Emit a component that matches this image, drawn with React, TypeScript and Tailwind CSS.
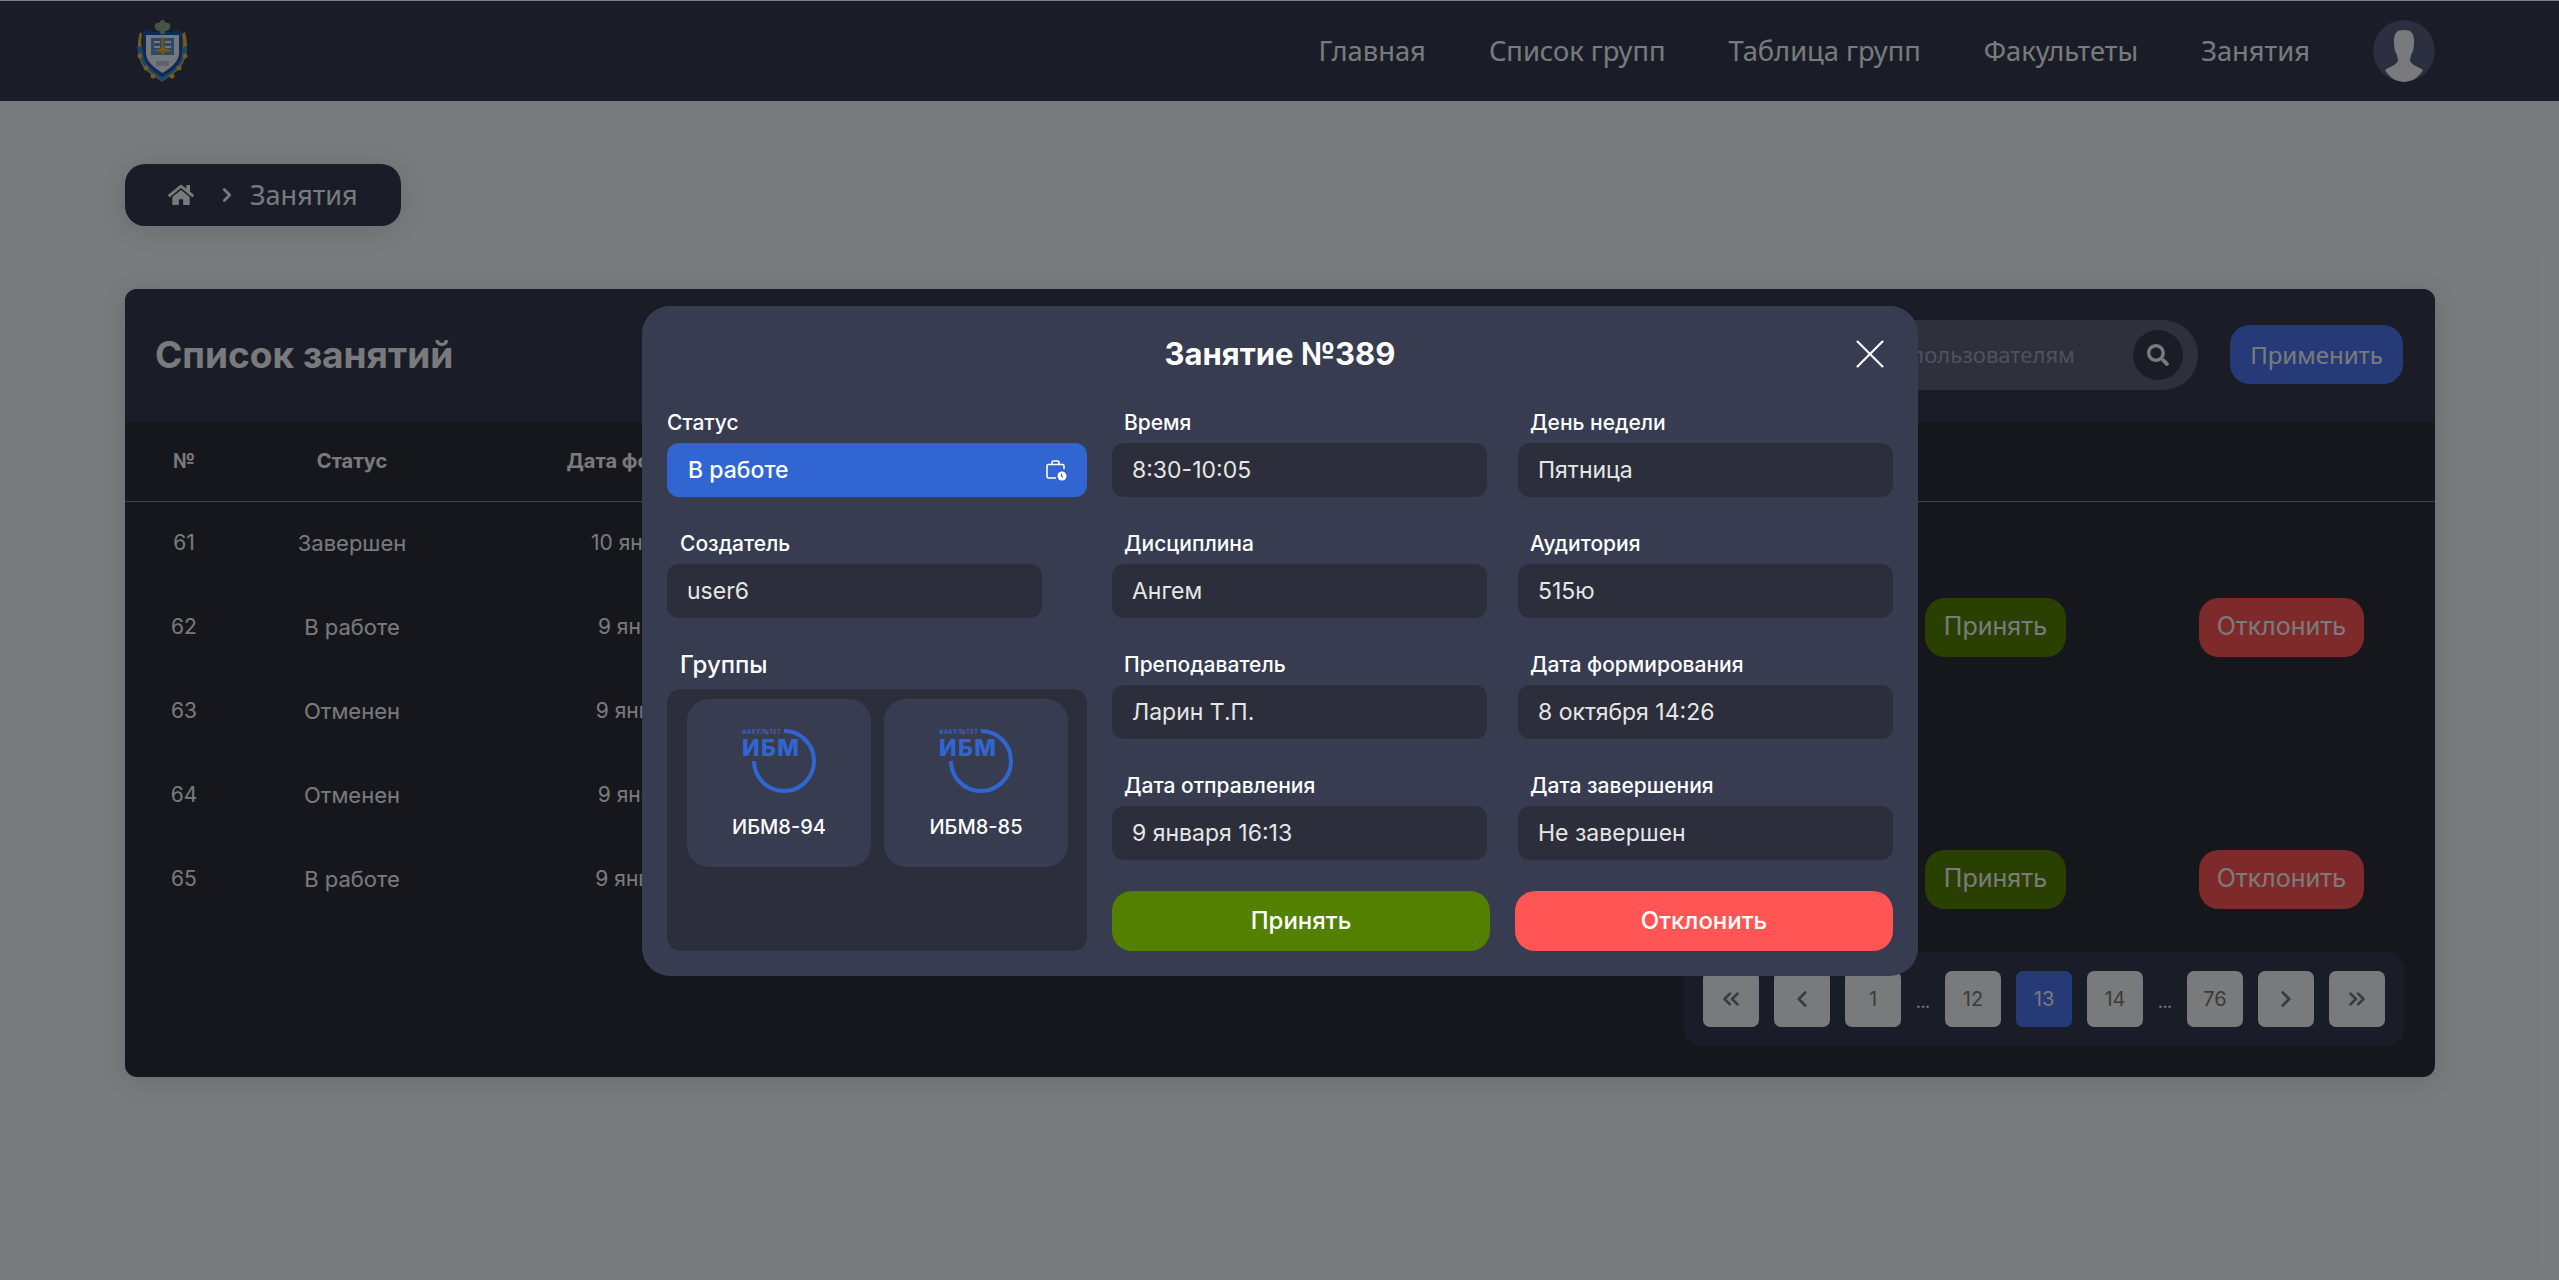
import { ChevronLeft, ChevronRight, ChevronsLeft, ChevronsRight, X } from "lucide-react";
import { FaHome, FaSearch } from "react-icons/fa";

const navItems = ["Главная", "Список групп", "Таблица групп", "Факультеты", "Занятия"];

const rows = [
  { id: 61, status: "Завершен", date: "10 января 12:40" },
  { id: 62, status: "В работе", date: "9 января 16:13", actions: true },
  { id: 63, status: "Отменен", date: "9 января 15:02" },
  { id: 64, status: "Отменен", date: "9 января 14:51" },
  { id: 65, status: "В работе", date: "9 января 14:20", actions: true },
];

const Crest = () => (
  <svg viewBox="0 0 53 63" className="w-[53px] h-[63px]">
    {/* laurel */}
    <path d="M4 12c-4 14-3 30 7 39l15 11 15-11c10-9 12-25 8-39l-3 2c1 5 1 10 0 16-2 8-6 15-12 19l-8 6-8-6c-6-4-10-11-12-19-1-6-1-11 0-16z" fill="#e0b93a" />
    <path d="M1 26c1 10 5 18 11 24l14 12 14-12c6-6 10-14 11-24l-5 1c-1 8-4 15-10 20l-10 8-10-8c-6-5-9-12-10-20z" fill="#3f86d6" />
    <circle cx="4" cy="36" r="2.500" fill="#e0b93a" />
    <circle cx="49" cy="36" r="2.500" fill="#e0b93a" />
    <circle cx="10" cy="48" r="2.500" fill="#e0b93a" />
    <circle cx="43" cy="48" r="2.500" fill="#e0b93a" />
    <circle cx="17" cy="56" r="2.500" fill="#e0b93a" />
    <circle cx="36" cy="56" r="2.500" fill="#e0b93a" />
    {/* shield */}
    <path d="M7 12l6-3 4 3h19l4-3 6 3v21c0 10-9 18-20 24C16 51 7 43 7 33z" fill="#1a56a8" />
    <path d="M10 15h33v18c0 8-7 14-16.500 20C17 47 10 41 10 33z" fill="#eceef1" />
    <rect x="15" y="18" width="23" height="17" fill="#5a93d4" />
    <rect x="18" y="21" width="6" height="2" fill="#eceef1" />
    <rect x="29" y="21" width="6" height="2" fill="#eceef1" />
    <rect x="18" y="26" width="6" height="2" fill="#eceef1" />
    <rect x="29" y="26" width="6" height="2" fill="#eceef1" />
    <path d="M25.500 17h2l1 11 8 3-8 1-2 4-1-4-8-1 8-3z" fill="#f0ae10" />
    <rect x="20" y="41" width="13" height="5" fill="#b6c6dc" />
    {/* eagle */}
    <path d="M26.500 0c2 0 3 2 3 3 2-1 5 0 5 3s-3 5-5 5l-1 3h-4l-1-3c-2 0-5-2-5-5s3-4 5-3c0-1 1-3 3-3z" fill="#8aa886" />
  </svg>
);

const Avatar = () => (
  <svg viewBox="0 0 62 62" className="w-[62px] h-[62px] rounded-full">
    <circle cx="31" cy="31" r="31" fill="#565f7e" />
    <path d="M31 10c7 0 10 3 10 11 0 7-1 11-3 14l-1 6c1 3 6 5 13 9-4 7-11 12-19 12s-15-5-19-12c7-4 12-6 13-9l-1-6c-2-3-3-7-3-14 0-8 3-11 10-11z" fill="#f3f5f8" />
  </svg>
);

const Logo = () => (
  <svg viewBox="0 0 75 65" className="w-[75px] h-[65px]">
    <path d="M42 2a30 30 0 1 1-30 30" fill="none" stroke="#3166d2" strokeWidth="4" />
    <text x="0" y="5" fontSize="5.500" fontWeight="700" fontFamily="Inter" fill="#3166d2" textLength="39">ФАКУЛЬТЕТ</text>
    <text x="0" y="27" fontSize="23" fontWeight="800" fontFamily="Inter" fill="#3166d2" textLength="57">ИБМ</text>
  </svg>
);

const BagClock = () => (
  <svg viewBox="0 0 22 22" className="w-[22px] h-[22px]" fill="none" stroke="#fff" strokeWidth="1.600">
    <path d="M19 10V7a1.500 1.500 0 0 0-1.500-1.500h-14A1.500 1.500 0 0 0 2 7v10.500A1.500 1.500 0 0 0 3.500 19H11" />
    <path d="M7 5.500V3.500A1.500 1.500 0 0 1 8.500 2h4A1.500 1.500 0 0 1 14 3.500v2" />
    <circle cx="17" cy="17" r="4.500" fill="#fff" stroke="none" />
    <path d="M16.500 14.800V17l1.500 1.300" stroke="#3166d2" strokeWidth="1.100" />
  </svg>
);

const Field = ({ label, value }: { label: string; value: string }) => (
  <div className="flex flex-col">
    <div className="h-[21px] mb-[10px] pl-[12px] text-[21px] leading-[21px] font-medium text-white whitespace-nowrap">{label}</div>
    <div className="h-[54px] rounded-[12px] bg-[#2c2f3b] pl-[20px] flex items-center text-[23px] text-[#e6e6e6]">{value}</div>
  </div>
);

const PageBtn = ({ children, active }: { children: React.ReactNode; active?: boolean }) => (
  <div className={`w-[56px] h-[56px] rounded-[7px] flex items-center justify-center text-[20px] ${active ? "bg-[#4e74f0] text-[#f3f5f8]" : "bg-[#f3f5f8] text-[#777]"}`}>
    {children}
  </div>
);

const Dots = () => <div className="w-[14px] text-center text-[14px] text-[#f3f5f8] font-bold leading-none mt-[8px]">...</div>;

const App = () => {
  return (
    <div className="relative min-h-[1280px] bg-[#f3f5f8]" style={{ fontFamily: '"Inter", "Liberation Sans", sans-serif' }}>
      {/* Header */}
      <header className="h-[101px] bg-[#353a4e] border-t border-t-[#fff] flex items-center justify-between pl-[136px] pr-[124px]">
        <Crest />
        <nav className="flex items-center gap-[63px] text-[27.3px] text-[#f3f5f8]" style={{ fontFamily: '"Noto Sans", sans-serif' }}>
          {navItems.map((item) => (
            <span key={item}>{item}</span>
          ))}
          <Avatar />
        </nav>
      </header>

      <main className="pl-[125px] pr-[124px] pt-[63px]">
        {/* Breadcrumbs */}
        <div className="w-[276px] h-[62px] rounded-[20px] bg-[#353a4e] shadow-[0_4px_30px_rgba(0,0,0,0.12)] flex items-center pl-[43px] text-[#f3f5f8]">
          <FaHome className="text-[26px]" />
          <ChevronRight size={22} strokeWidth={3} className="ml-[22px]" />
          <span className="ml-[12px] text-[27px]" style={{ fontFamily: '"Noto Sans", sans-serif' }}>Занятия</span>
        </div>

        {/* Lessons card */}
        <div className="mt-[63px] h-[788px] rounded-[12px] bg-[#2c2e38] shadow-[0_4px_30px_rgba(0,0,0,0.12)] overflow-hidden flex flex-col">
          <div className="h-[133px] shrink-0 bg-[#353a4e] flex items-center justify-between pl-[30px] pr-[32px] pb-[2px]">
            <h1 className="text-[37px] font-bold text-[#f3f5f8]">Список занятий</h1>
            <div className="flex items-center gap-[32px]">
              <div className="w-[430px] h-[70px] rounded-full bg-[#5c6078] flex items-center justify-end pr-[15px]">
                <span className="mr-[58px] text-[22px] text-[#a0a3bd] whitespace-nowrap" style={{ fontFamily: '"Noto Sans", sans-serif' }}>Поиск по пользователям</span>
                <div className="w-[50px] h-[50px] shrink-0 rounded-full bg-[#353a4e] flex items-center justify-center">
                  <FaSearch className="text-[22px] text-[#f3f5f8]" />
                </div>
              </div>
              <div className="w-[173px] h-[59px] rounded-[20px] bg-[#4e74f0] flex items-center justify-center text-[24px] text-[#f3f5f8]" style={{ fontFamily: '"Noto Sans", sans-serif' }}>Применить</div>
            </div>
          </div>

          <div className="h-[80px] shrink-0 border-b border-b-[#8a8a8a] flex items-center pb-[2px] text-[20px] font-bold text-[#f3f5f8]">
            <div className="w-[118px] text-center">№</div>
            <div className="w-[218px] text-center">Статус</div>
            <div className="w-[420px] text-center">Дата формирования</div>
          </div>

          <div className="flex flex-col">
            {rows.map((row) => (
              <div key={row.id} className="h-[84px] flex items-center pb-[2px] text-[21px] text-[#f3f5f8]">
                <div className="w-[118px] text-center">{row.id}</div>
                <div className="w-[218px] text-center text-[22px]">{row.status}</div>
                <div className="w-[420px] text-center">{row.date}</div>
                <div className="flex-1" />
                {row.actions && (
                  <div className="flex items-center gap-[133px] pr-[71px]">
                    <div className="w-[141px] h-[59px] rounded-[20px] bg-[#548000] flex items-center justify-center text-[25px] text-[#f3f5f8]">Принять</div>
                    <div className="w-[165px] h-[59px] rounded-[20px] bg-[#ff5555] flex items-center justify-center text-[25px] text-[#f3f5f8]">Отклонить</div>
                  </div>
                )}
              </div>
            ))}
          </div>

          {/* Pagination */}
          <div className="flex justify-end pr-[31px] mt-[30px]">
            <div className="h-[94px] rounded-[16px] bg-[#353a4e] pl-[19px] pr-[19px] flex items-center gap-[15px]">
              <PageBtn><ChevronsLeft size={26} strokeWidth={2.500} /></PageBtn>
              <PageBtn><ChevronLeft size={26} strokeWidth={2.500} /></PageBtn>
              <PageBtn>1</PageBtn>
              <Dots />
              <PageBtn>12</PageBtn>
              <PageBtn active>13</PageBtn>
              <PageBtn>14</PageBtn>
              <Dots />
              <PageBtn>76</PageBtn>
              <PageBtn><ChevronRight size={26} strokeWidth={2.500} /></PageBtn>
              <PageBtn><ChevronsRight size={26} strokeWidth={2.500} /></PageBtn>
            </div>
          </div>
        </div>
      </main>

      {/* Modal overlay */}
      <div className="absolute inset-0 bg-black/50 flex items-start justify-center pt-[306px] pl-[1px]">
        <div className="relative w-[1276px] h-[670px] rounded-[28px] bg-[#383c50] px-[25px]">
          <div className="h-[106px] flex items-center justify-center pb-[10px] text-[31px] font-bold text-white">Занятие №389</div>
          <button className="absolute right-[23px] top-[23px] text-white">
            <X size={50} strokeWidth={1} />
          </button>

          <div className="flex gap-[25px]">
            <div className="w-[420px] flex flex-col">
              <div className="h-[21px] mb-[10px] text-[21px] leading-[21px] font-medium text-white">Статус</div>
              <div className="h-[54px] rounded-[12px] bg-[#3166d2] flex items-center justify-between pl-[21px] pr-[20px] text-[23px] font-medium text-white">
                В работе
                <BagClock />
              </div>
              <div className="mt-[36px] w-[375px] [&>div>div:first-child]:pl-[13px]">
                <Field label="Создатель" value="user6" />
              </div>
              <div className="mt-[35px] mb-[12px] pl-[13px] h-[24px] leading-[24px] text-[24px] font-medium text-white">Группы</div>
              <div className="h-[262px] rounded-[14px] bg-[#2c2f3b] pl-[20px] pt-[10px] flex gap-[13px] items-start">
                {["ИБМ8-94", "ИБМ8-85"].map((group) => (
                  <div key={group} className="w-[184px] h-[168px] rounded-[22px] bg-[#383c50] flex flex-col items-center pt-[30px]">
                    <Logo />
                    <div className="mt-[18px] text-[20px] font-medium text-white">{group}</div>
                  </div>
                ))}
              </div>
            </div>

            <div className="flex-1 flex flex-col">
              <div className="grid grid-cols-2 gap-x-[31px] gap-y-[36px]">
                <Field label="Время" value="8:30-10:05" />
                <Field label="День недели" value="Пятница" />
                <Field label="Дисциплина" value="Ангем" />
                <Field label="Аудитория" value="515ю" />
                <Field label="Преподаватель" value="Ларин Т.П." />
                <Field label="Дата формирования" value="8 октября 14:26" />
                <Field label="Дата отправления" value="9 января 16:13" />
                <Field label="Дата завершения" value="Не завершен" />
              </div>
              <div className="mt-[31px] flex gap-[25px]">
                <button className="w-[378px] h-[60px] rounded-[20px] bg-[#548000] text-[24px] font-medium text-white">Принять</button>
                <button className="w-[378px] h-[60px] rounded-[20px] bg-[#ff5555] text-[24px] font-medium text-white">Отклонить</button>
              </div>
            </div>
          </div>
        </div>
      </div>
    </div>
  );
};

export default App;
